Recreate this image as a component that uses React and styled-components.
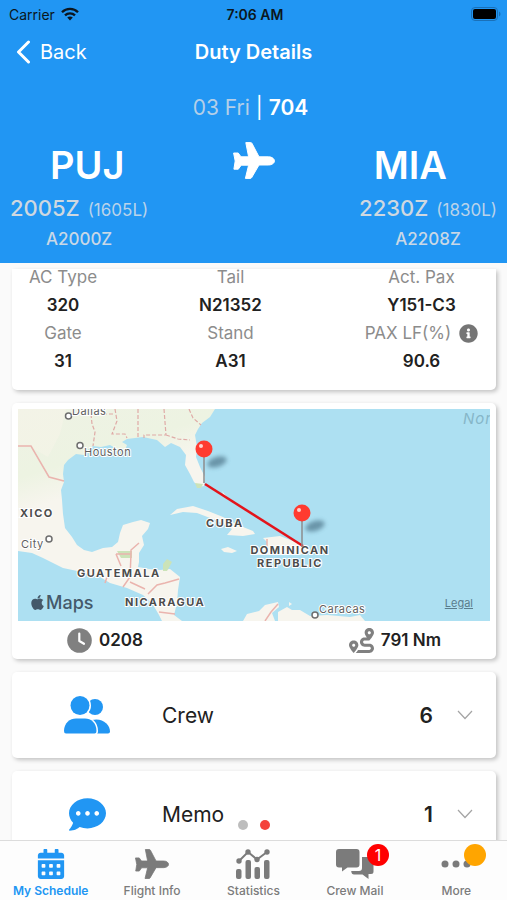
import React from 'react';
import styled, { createGlobalStyle } from 'styled-components';
import { FaCalendarAlt, FaInfoCircle, FaRoute, FaCommentDots, FaApple } from 'react-icons/fa';

const facts = [
      { label: 'AC Type', value: '320' },
      { label: 'Tail', value: 'N21352' },
      { label: 'Act. Pax', value: 'Y151-C3' },
      { label: 'Gate', value: '31' },
      { label: 'Stand', value: 'A31' },
      { label: 'PAX LF(%)', value: '90.6', info: true },
];

const WifiIcon = () => (
      <svg width="18" height="14" viewBox="0 0 18 14" fill="none" stroke="#0b1620" strokeWidth="2.3">
            <path d="M1 5.2C5.4 .7 12.6 .7 17 5.2" />
            <path d="M4 8.4C6.8 5.6 11.2 5.6 14 8.4" />
            <path d="M9 13.4L6.2 10.5C7.8 9 10.2 9 11.8 10.5Z" fill="#0b1620" stroke="none" />
      </svg>
);

const BatteryIcon = () => (
      <svg width="30" height="14" viewBox="0 0 30 14">
            <rect x="0.5" y="0.5" width="26" height="13" rx="3.5" fill="none" stroke="#1a70b8" />
            <rect x="2" y="2" width="23" height="10" rx="2" fill="#000" />
            <path d="M28 4.5C30 5.5 30 8.5 28 9.5Z" fill="#1a70b8" />
      </svg>
);

const BackIcon = () => (
      <svg width="15" height="24" viewBox="0 0 15 24" fill="none" stroke="#fff" strokeWidth="3" strokeLinecap="round" strokeLinejoin="round">
            <path d="M12.5 2L2.5 12L12.5 22" />
      </svg>
);

const PlaneIcon = ({ width, height }) => (
      <svg width={width} height={height} viewBox="0 0 42 37" fill="currentColor">
            <path
                  stroke="currentColor"
                  strokeLinejoin="round"
                  d="M12.800 .6H17.700Q18.600 .6 19 1.400L26 14.800H35.500C39 14.800 41.500 17 41.500 18.900C41.500 21 39 23 35.500 23H26L18.600 35.700Q18.200 36.400 17.300 36.400H12.400L15.600 23.200H8.200L5.300 27.200H.9L2.200 19L.6 11H5.200L8 14.800H15.600Z"
            />
      </svg>
);

const ClockIcon = () => (
      <svg width="25" height="25" viewBox="0 0 25 25">
            <circle cx="12.5" cy="12.5" r="12.3" fill="#808080" />
            <path d="M12.3 5.5V13L17 15.8" fill="none" stroke="#fff" strokeWidth="2.2" strokeLinecap="round" strokeLinejoin="round" />
      </svg>
);

const CrewIcon = () => (
      <svg width="46" height="38" viewBox="0 0 46 38" fill="#2196f3">
            <circle cx="31" cy="11" r="8" />
            <path d="M28 37.5V24C38 21.500 46 28 46 35.500Q46 37.500 44 37.500Z" />
            <circle cx="16" cy="9.500" r="9.500" stroke="#fff" strokeWidth="3" paintOrder="stroke" />
            <path d="M2 37.500Q0 37.500 0 35C0 27 6 22.500 12 22.500H21C27 22.500 32.500 27 32.500 35Q32.500 37.500 30.500 37.500Z" stroke="#fff" strokeWidth="3" paintOrder="stroke" />
      </svg>
);

const ChevronIcon = () => (
      <svg width="16" height="10" viewBox="0 0 16 10" fill="none" stroke="#a4a4a4" strokeWidth="1.2">
            <path d="M1 1L8 8.500L15 1" />
      </svg>
);

const StatsIcon = () => (
      <svg width="34" height="30" viewBox="0 0 34 30" fill="currentColor">
            <rect x="0" y="20" width="5.500" height="10" rx="2" />
            <rect x="9.500" y="11" width="5.500" height="19" rx="2" />
            <rect x="18.500" y="18" width="5.500" height="12" rx="2" />
            <rect x="28" y="11" width="5.500" height="19" rx="2" />
            <path d="M3 12L12 3L21 10.500L31 3" fill="none" stroke="currentColor" strokeWidth="2" />
            <circle cx="3" cy="12" r="2.700" />
            <circle cx="12" cy="3" r="2.700" />
            <circle cx="21" cy="10.500" r="2.700" />
            <circle cx="31" cy="3" r="2.700" />
      </svg>
);

const MailIcon = () => (
      <svg width="38" height="30" viewBox="0 0 38 30" fill="currentColor">
            <path d="M26 8H35Q37.500 8 37.500 10.500V22.500Q37.500 25 35 25H32.500V30L26.500 25.500H18Q15.500 25.500 15.200 22H23Q26 22 26 19Z" />
            <path d="M3 0H20.500Q23.500 0 23.500 3V15.500Q23.500 18.500 20.500 18.500H11.500L6 22.500V18.500H3Q0 18.500 0 15.500V3Q0 0 3 0Z" />
      </svg>
);

const MoreIcon = () => (
      <svg width="30" height="8" viewBox="0 0 30 8" fill="currentColor">
            <circle cx="4" cy="4" r="3.500" />
            <circle cx="15" cy="4" r="3.500" />
            <circle cx="26" cy="4" r="3.500" />
      </svg>
);

const Pin = ({ x, y }) => (
      <g transform={`translate(${x} ${y})`}>
            <ellipse cx="13" cy="-21" rx="10" ry="5" fill="#3c6478" opacity="0.6" transform="rotate(-18 13 -21)" filter="url(#soft)" />
            <path d="M0 0V-27" stroke="#8c8c8c" strokeWidth="1.500" />
            <circle cx="0" cy="-34" r="8.500" fill="#ff3b30" />
            <circle cx="-3" cy="-37" r="2" fill="#ffd2cf" />
      </g>
);

const RouteMap = () => (
      <MapSvg viewBox="0 0 472 212" role="img" aria-label="Route map">
            <defs>
                  <filter id="soft" x="-50%" y="-50%" width="200%" height="200%">
                        <feGaussianBlur stdDeviation="2.3" />
                  </filter>
                  <linearGradient id="land" x1="0" y1="0" x2="0.300" y2="1">
                        <stop offset="0" stopColor="#eef2e4" />
                        <stop offset="0.300" stopColor="#edf3e2" />
                        <stop offset="0.450" stopColor="#f7f5ee" />
                  </linearGradient>
            </defs>
            <rect width="472" height="212" fill="#ade0f2" />
            <path
                  fill="url(#land)"
                  d="M0 0H197L192 8L184 14L180 20L177 26L179 38L178 48L182 58L187 68L186 77L181 78L176 73L172 65L167 56L168 46L162 38L153 34L147 38L139 31L125 28L109 30L104 33L109 36L107 41L99 40L92 36L83 38L75 37L67 43L66 46L58 45L50 51L46 56L45 65L46 73L43 81L44 91L45 105L47 119L54 128L59 136L66 141L74 143L85 139L94 138L100 133L102 124L105 116L115 113L123 111L132 114L130 120L124 127L126 136L121 144L121 153L120 158L131 160L142 161L152 160L162 168L160 181L159 194L156 206L164 212H144L141 206L134 194L125 186L109 179L92 174L82 168L72 166L64 163L45 159L25 149L14 144L0 142Z"
            />
            <path fill="#fbf4ea" opacity="0.400" d="M0 0H48L42 25L30 48L12 38L0 38Z" />
            <g fill="#f7f5ee">
                  <path d="M152 106L159 100L175 97L190 102L205 108L220 116L235 122L237 125L225 127L209 126L214 120L200 112L179 104L165 103Z" />
                  <path d="M203 140L210 138L219 142L214 144L206 143Z" />
                  <path d="M236 141L248 139L249 133L245 129L262 127L275 132L286 136L291 142L282 146H237Z" />
                  <path d="M225 212L229 205L241 202L247 196L260 193L261 198L254 204L257 212Z" />
                  <path d="M260 212L260 203L269 198L274 201H282L292 207L309 206L332 208L342 206L347 212Z" />
                  <path d="M204 82L209 88L206 87Z M271 193L274 195L271 197Z" />
            </g>
            <path fill="#cbe3b8" d="M99 142H114V149H103Z M145 155L149 150L154 153L149 162L145 162Z M177 74L185 75L183 79H179Z" />
            <g fill="none" stroke="#eab4ae" strokeWidth="1.500">
                  <path d="M0 37H13L31 68L46 72" />
                  <path d="M98 145H113V141L121 134M98 145L103 157M113 145L112 168L105 178M112 173L127 180M130 185L139 176L147 174L161 170M141 203L157 205M89 168L87 174" />
                  <path d="M249 130V139M247 212L253 203L260 195" />
            </g>
            <g fill="none" stroke="#dfaaa6" strokeWidth="1.200" strokeDasharray="4 2">
                  <path d="M73 5L74 15L77 23L75 37" />
                  <path d="M85 5H97M97 0L99 12L94 25H107L109 29" />
                  <path d="M120 0V30M146 0L148 26H126V29M148 26L160 30L172 31M171 0L175 9L183 16" />
            </g>
            <g fill="#fff" stroke="#6e6e6e" strokeWidth="1.500">
                  <circle cx="50.500" cy="7" r="3" />
                  <circle cx="62" cy="36.500" r="3" />
                  <circle cx="31" cy="130" r="3" />
                  <circle cx="297" cy="206" r="3" />
            </g>
            <Town x="54" y="6">Dallas</Town>
            <Town x="66" y="47">Houston</Town>
            <Town x="3" y="139">City</Town>
            <Town x="301" y="204">Caracas</Town>
            <Country x="2" y="108">XICO</Country>
            <Country x="188" y="118">CUBA</Country>
            <Country x="59" y="168">GUATEMALA</Country>
            <Country x="107" y="197">NICARAGUA</Country>
            <Country x="272" y="145" textAnchor="middle">DOMINICAN</Country>
            <Country x="272" y="158" textAnchor="middle">REPUBLIC</Country>
            <Ocean x="445" y="15">Nor</Ocean>
            <path d="M187 75L285 137" stroke="#e3141b" strokeWidth="2.500" />
            <Pin x={186} y={74} />
            <Pin x={284} y={138} />
      </MapSvg>
);

const Times = ({ time, local, actual }) => (
      <TimesBox>
            <Time>{time}<Local>({local})</Local></Time>
            <Actual>{actual}</Actual>
      </TimesBox>
);

const Section = ({ icon, title, count }) => (
      <SectionCard type="button">
            <SectionIcon>{icon}</SectionIcon>
            <SectionTitle>{title}</SectionTitle>
            <Count>{count}</Count>
            <ChevronIcon />
      </SectionCard>
);

const Tab = ({ icon, label, active, badge }) => (
      <TabLink href="#" $active={active}>
            <TabIcon>
                  {icon}
                  {badge && <Badge $color={badge.color}>{badge.text}</Badge>}
            </TabIcon>
            {label}
      </TabLink>
);

const App = () => {
      return (
            <>
            <GlobalStyle />
            <Screen>
                  <Header>
                        <StatusBar>
                              <Carrier>Carrier <WifiIcon /></Carrier>
                              <Clock>7:06 AM</Clock>
                              <Battery><BatteryIcon /></Battery>
                        </StatusBar>
                        <NavBar>
                              <BackButton type="button"><BackIcon /> Back</BackButton>
                              <H1>Duty Details</H1>
                        </NavBar>
                        <FlightLine><Muted>03 Fri</Muted> | <b>704</b></FlightLine>
                        <Airports>
                              <span>PUJ</span>
                              <PlaneIcon width={42} height={37} />
                              <span>MIA</span>
                        </Airports>
                        <TimesRow>
                              <Times time="2005Z" local="1605L" actual="A2000Z" />
                              <Times time="2230Z" local="1830L" actual="A2208Z" />
                        </TimesRow>
                  </Header>

                  <Content>
                        <FactsCard>
                              {facts.map((fact) => (
                                    <Fact key={fact.label}>
                                          <FactLabel>{fact.label}{fact.info && <FaInfoCircle size={19} />}</FactLabel>
                                          <FactValue>{fact.value}</FactValue>
                                    </Fact>
                              ))}
                        </FactsCard>

                        <MapCard>
                              <MapFrame>
                                    <RouteMap />
                                    <MapBrand><FaApple size={17} />Maps</MapBrand>
                                    <Legal href="#">Legal</Legal>
                              </MapFrame>
                              <MapFooter>
                                    <Stat><ClockIcon /> 0208</Stat>
                                    <Stat><FaRoute size={25} color="#808080" /> 791 Nm</Stat>
                              </MapFooter>
                        </MapCard>

                        <Section icon={<CrewIcon />} title="Crew" count="6" />
                        <Section icon={<FaCommentDots size={37} />} title="Memo" count="1" />

                        <Pager>
                              <Dot $color="#bdbdbd" />
                              <Dot $color="#f4433c" />
                        </Pager>
                  </Content>

                  <TabBar>
                        <Tab icon={<FaCalendarAlt size={30} />} label="My Schedule" active />
                        <Tab icon={<PlaneIcon width={34} height={30} />} label="Flight Info" />
                        <Tab icon={<StatsIcon />} label="Statistics" />
                        <Tab icon={<MailIcon />} label="Crew Mail" badge={{ text: '1', color: '#ff0000' }} />
                        <Tab icon={<MoreIcon />} label="More" badge={{ text: '', color: '#ffa500' }} />
                  </TabBar>
            </Screen>
            </>
      );
};

const GlobalStyle = createGlobalStyle`
      * {
            box-sizing: border-box;
      }
      body {
            margin: 0;
            background: #fafafa;
            color: #212121;
            font-family: Inter, "Liberation Sans", sans-serif;
      }
      button {
            font-family: inherit;
            color: inherit;
            border: none;
            cursor: pointer;
      }
      svg {
            flex-shrink: 0;
      }
`;

const Screen = styled.div`
      display: flex;
      flex-direction: column;
      height: 100vh;
`;

const Header = styled.header`
      background: #2196f3;
      color: #fff;
      flex-shrink: 0;
      padding-bottom: 12px;
`;

const StatusBar = styled.div`
      display: grid;
      grid-template-columns: 1fr auto 1fr;
      align-items: center;
      height: 28px;
      padding: 0 6px 0 9px;
      color: #0b1620;
      font-size: 14px;
`;

const Carrier = styled.span`
      display: flex;
      align-items: center;
      gap: 6px;
`;

const Clock = styled.span`
      font-weight: 600;
`;

const Battery = styled.span`
      display: flex;
      justify-content: flex-end;
`;

const NavBar = styled.div`
      display: grid;
      grid-template-columns: 1fr auto 1fr;
      align-items: center;
      height: 48px;
      padding: 0 16px;
`;

const BackButton = styled.button`
      display: flex;
      align-items: center;
      gap: 9px;
      padding: 0;
      background: none;
      font-size: 20px;
`;

const H1 = styled.h1`
      margin: 0;
      font-size: 20px;
      font-weight: 600;
`;

const FlightLine = styled.p`
      margin: 18px 6px 0 0;
      font-size: 21px;
      line-height: 28px;
      text-align: center;
      b {
            font-weight: 600;
      }
`;

const Muted = styled.span`
      color: #b4cfe8;
`;

const Airports = styled.div`
      display: flex;
      justify-content: space-between;
      padding: 20px 60px 0 50px;
      font-size: 38px;
      font-weight: 600;
      line-height: 46px;
      svg {
            margin-left: 10px;
      }
`;

const TimesRow = styled.div`
      display: flex;
      justify-content: space-between;
      padding: 3px 10px 0;
`;

const TimesBox = styled.div`
      display: flex;
      flex-direction: column;
      align-items: center;
`;

const Time = styled.div`
      display: flex;
      align-items: baseline;
      gap: 8px;
      color: #cfd8e0;
      font-size: 22px;
      font-weight: 500;
      line-height: 34px;
`;

const Local = styled.span`
      color: #b9d3ea;
      font-size: 17px;
      font-weight: 400;
`;

const Actual = styled.div`
      color: #c9d8e6;
      font-size: 17px;
      font-weight: 500;
      line-height: 24px;
`;

const Content = styled.main`
      position: relative;
      flex: 1;
      min-height: 0;
      overflow: hidden;
      padding: 6px 11px 0 12px;
`;

const Card = styled.section`
      background: #fff;
      border-radius: 5px;
      box-shadow: 2px 2px 4px rgba(0, 0, 0, 0.22);
      margin-bottom: 13px;
`;

const FactsCard = styled(Card)`
      display: grid;
      grid-template-columns: 102px 1fr 149px;
      padding-bottom: 9px;
      border-radius: 0 0 5px 5px;
`;

const Fact = styled.div`
      display: flex;
      flex-direction: column;
      align-items: center;
      font-size: 17px;
`;

const FactLabel = styled.div`
      display: flex;
      align-items: center;
      gap: 8px;
      height: 16px;
      color: #8c8c8c;
      svg {
            color: #757575;
      }
`;

const FactValue = styled.div`
      font-weight: 600;
      line-height: 40px;
`;

const MapCard = styled(Card)`
      padding: 6px 6px 0;
`;

const MapFrame = styled.div`
      position: relative;
`;

const MapSvg = styled.svg`
      display: block;
      width: 100%;
`;

const Town = styled.text`
      fill: #5f5f5f;
      font-size: 11px;
      letter-spacing: 0.5px;
      stroke: #fff;
      stroke-width: 2px;
      paint-order: stroke;
`;

const Country = styled.text`
      fill: #4c4c4c;
      font-size: 11px;
      font-weight: 700;
      letter-spacing: 1.5px;
      stroke: #fff;
      stroke-width: 2px;
      paint-order: stroke;
`;

const Ocean = styled.text`
      fill: #86b6c8;
      font-size: 15px;
      font-style: italic;
      letter-spacing: 1px;
`;

const MapBrand = styled.span`
      position: absolute;
      left: 11px;
      bottom: 8px;
      display: flex;
      align-items: center;
      color: #44596a;
      font-size: 18px;
      font-weight: 500;
`;

const Legal = styled.a`
      position: absolute;
      right: 17px;
      bottom: 11px;
      color: #5a7c8c;
      font-size: 11px;
`;

const MapFooter = styled.div`
      display: flex;
      justify-content: space-between;
      padding: 0 49px;
      height: 38px;
`;

const Stat = styled.div`
      display: flex;
      align-items: center;
      gap: 7px;
      font-size: 17px;
      font-weight: 600;
`;

const SectionCard = styled(Card).attrs({ as: 'button' })`
      display: flex;
      align-items: center;
      width: 100%;
      height: 86px;
      padding: 0 23px 0 0;
      text-align: left;
`;

const SectionIcon = styled.span`
      display: flex;
      justify-content: center;
      width: 150px;
      color: #2196f3;
`;

const SectionTitle = styled.span`
      flex: 1;
      font-size: 21px;
`;

const Count = styled.span`
      margin-right: 24px;
      font-size: 21px;
      font-weight: 600;
`;

const Pager = styled.div`
      position: absolute;
      left: 50%;
      bottom: 10px;
      display: flex;
      gap: 12px;
      transform: translateX(-50%);
`;

const Dot = styled.span`
      width: 10px;
      height: 10px;
      border-radius: 50%;
      background: ${(props) => props.$color};
`;

const TabBar = styled.nav`
      display: grid;
      grid-template-columns: repeat(5, 1fr);
      flex-shrink: 0;
      height: 60px;
      border-top: 1px solid #dcdcdc;
      background: #fdfdfd;
`;

const TabLink = styled.a`
      display: flex;
      flex-direction: column;
      align-items: center;
      padding-top: 7px;
      color: ${(props) => (props.$active ? '#2196f3' : '#7b7b7b')};
      font-size: 12px;
      font-weight: ${(props) => (props.$active ? 600 : 500)};
      line-height: 16px;
      text-decoration: none;
`;

const TabIcon = styled.span`
      position: relative;
      display: flex;
      align-items: center;
      height: 32px;
      margin-bottom: 3px;
`;

const Badge = styled.span`
      position: absolute;
      top: -4px;
      right: -15px;
      width: 22px;
      height: 22px;
      border-radius: 50%;
      background: ${(props) => props.$color};
      color: #fff;
      font-size: 16px;
      font-weight: 400;
      line-height: 22px;
      text-align: center;
`;

export default App;
